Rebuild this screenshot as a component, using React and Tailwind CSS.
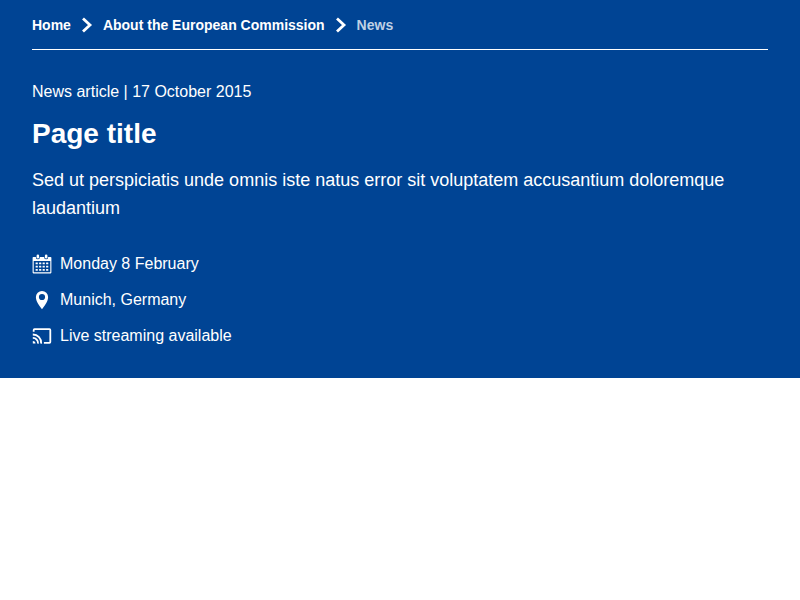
const crumbs = ['Home', 'About the European Commission'];

function Chevron() {
  return (
    <svg className="mx-2 size-4 shrink-0" viewBox="0 0 16 16" fill="none" stroke="currentColor" strokeWidth="2.8">
      <path d="M4 1.400 11 8l-7 6.600" />
    </svg>
  );
}

function CalendarIcon() {
  return (
    <svg className="size-5 shrink-0" viewBox="0 0 20 20" fill="currentColor">
      <path
        fillRule="evenodd"
        d="M1.400 3H3.900v.4a1.950 1.950 0 0 0 3.900 0V3h4.400v.4a1.950 1.950 0 0 0 3.900 0V3h2.500q.8 0 .8.8v14.800q0 .8-.8.8H1.400q-.8 0-.8-.8V3.800q0-.8.8-.8ZM1.700 7V17.700q0 .6.6.6h15.400q.6 0 .6-.6V7Z"
      />
      <rect x="4.600" y=".6" width="2.500" height="3.900" rx="1.250" />
      <rect x="12.900" y=".6" width="2.500" height="3.900" rx="1.250" />
      {[8.500, 11.700, 14.900].map((y) =>
        [3.600, 7.100, 10.600, 14.100].map((x) => <rect key={`${x}-${y}`} x={x} y={y} width="2.200" height="1.800" rx=".3" />)
      )}
    </svg>
  );
}

function PinIcon() {
  return (
    <svg className="size-5 shrink-0" viewBox="0 0 20 20" fill="currentColor">
      <path
        fillRule="evenodd"
        d="M10 .9a6.100 6.100 0 0 0-6.100 6.100C3.900 11.200 7 15.500 10 19.300 13 15.500 16.100 11.200 16.100 7A6.100 6.100 0 0 0 10 .9Zm0 3a3.100 3.100 0 1 1 0 6.200 3.100 3.100 0 0 1 0-6.200Z"
      />
    </svg>
  );
}

function StreamIcon() {
  return (
    <svg className="size-5 shrink-0" viewBox="0 0 20 20" fill="none" stroke="currentColor" strokeWidth="1.800">
      <path d="M1.700 5.700V4q0-.8.8-.8h15q.8 0 .8.8v12q0 .8-.8.8h-5.600" />
      <path d="M.8 8.500a8.400 8.400 0 0 1 8.400 9.100M.8 11.800a5.200 5.200 0 0 1 5.200 5.800" />
      <path d="M.8 14.900a2.700 2.700 0 0 1 2.700 2.700H.8Z" fill="currentColor" stroke="none" />
    </svg>
  );
}

const details = [
  { Icon: CalendarIcon, text: 'Monday 8 February' },
  { Icon: PinIcon, text: 'Munich, Germany' },
  { Icon: StreamIcon, text: 'Live streaming available' },
];

export default function App() {
  return (
    <div className="min-h-screen bg-white font-['Liberation_Sans',Arial,sans-serif]">
      <header className="h-[378px] bg-[#004494] px-8 text-white">
        <nav className="flex h-[50px] items-center border-b border-white text-sm font-bold">
          {crumbs.map((label) => (
            <span key={label} className="flex items-center">
              <a>{label}</a>
              <Chevron />
            </span>
          ))}
          <span className="text-[#bfd0e4]">News</span>
        </nav>
        <p className="mt-[30px] text-base leading-6">News article | 17 October 2015</p>
        <h1 className="mt-[14px] text-[28px] leading-8 font-bold">Page title</h1>
        <p className="mt-4 text-lg leading-7">
          Sed ut perspiciatis unde omnis iste natus error sit voluptatem accusantium doloremque laudantium
        </p>
        <ul className="mt-[30px] flex flex-col gap-3">
          {details.map(({ Icon, text }) => (
            <li key={text} className="flex items-center gap-2 text-base leading-6">
              <Icon />
              <span>{text}</span>
            </li>
          ))}
        </ul>
      </header>
    </div>
  );
}
